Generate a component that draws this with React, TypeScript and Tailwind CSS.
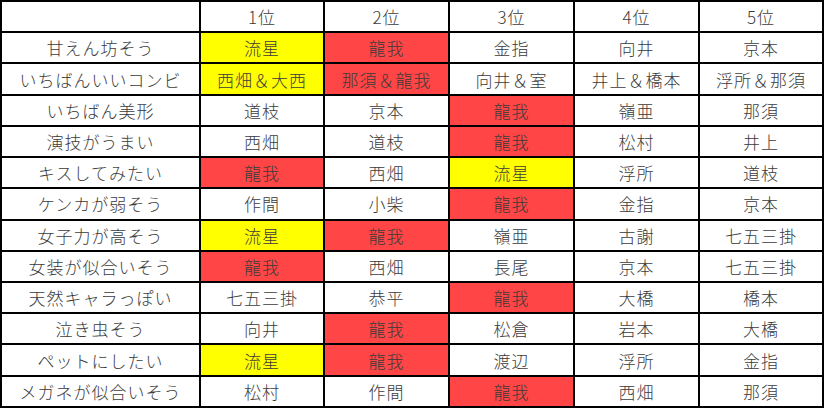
type Mark = 'y' | 'r' | undefined;

type Cell = { name: string; mark?: Mark };

const HEADERS = ['', '1位', '2位', '3位', '4位', '5位'];

const ROWS: { label: string; cells: Cell[] }[] = [
    { label: '甘えん坊そう', cells: [{ name: '流星', mark: 'y' }, { name: '龍我', mark: 'r' }, { name: '金指' }, { name: '向井' }, { name: '京本' }] },
    { label: 'いちばんいいコンビ', cells: [{ name: '西畑＆大西', mark: 'y' }, { name: '那須＆龍我', mark: 'r' }, { name: '向井＆室' }, { name: '井上＆橋本' }, { name: '浮所＆那須' }] },
    { label: 'いちばん美形', cells: [{ name: '道枝' }, { name: '京本' }, { name: '龍我', mark: 'r' }, { name: '嶺亜' }, { name: '那須' }] },
    { label: '演技がうまい', cells: [{ name: '西畑' }, { name: '道枝' }, { name: '龍我', mark: 'r' }, { name: '松村' }, { name: '井上' }] },
    { label: 'キスしてみたい', cells: [{ name: '龍我', mark: 'r' }, { name: '西畑' }, { name: '流星', mark: 'y' }, { name: '浮所' }, { name: '道枝' }] },
    { label: 'ケンカが弱そう', cells: [{ name: '作間' }, { name: '小柴' }, { name: '龍我', mark: 'r' }, { name: '金指' }, { name: '京本' }] },
    { label: '女子力が高そう', cells: [{ name: '流星', mark: 'y' }, { name: '龍我', mark: 'r' }, { name: '嶺亜' }, { name: '古謝' }, { name: '七五三掛' }] },
    { label: '女装が似合いそう', cells: [{ name: '龍我', mark: 'r' }, { name: '西畑' }, { name: '長尾' }, { name: '京本' }, { name: '七五三掛' }] },
    { label: '天然キャラっぽい', cells: [{ name: '七五三掛' }, { name: '恭平' }, { name: '龍我', mark: 'r' }, { name: '大橋' }, { name: '橋本' }] },
    { label: '泣き虫そう', cells: [{ name: '向井' }, { name: '龍我', mark: 'r' }, { name: '松倉' }, { name: '岩本' }, { name: '大橋' }] },
    { label: 'ペットにしたい', cells: [{ name: '流星', mark: 'y' }, { name: '龍我', mark: 'r' }, { name: '渡辺' }, { name: '浮所' }, { name: '金指' }] },
    { label: 'メガネが似合いそう', cells: [{ name: '松村' }, { name: '作間' }, { name: '龍我', mark: 'r' }, { name: '西畑' }, { name: '那須' }] },
];

function bg(mark: Mark) {
    if (mark === 'y') return 'bg-[#ffff00]';
    if (mark === 'r') return 'bg-[#ff4545]';
    return 'bg-white';
}

const cellBase =
    'flex items-center justify-center border-r-2 border-b-2 border-black text-[17px] leading-none tracking-[0.06em] whitespace-nowrap';

export default function App() {
    return (
        <div
            className="w-[825px] h-[408px] bg-white text-[#3b3b3b] font-light"
            style={{ fontFamily: '"Noto Sans CJK JP", "Noto Sans", sans-serif' }}
        >
            <div className="grid grid-cols-[199px_124px_125px_125px_125px_124px] auto-rows-[31.23px] w-fit border-l-2 border-t-2 border-black">
                {HEADERS.map((h, i) => (
                    <div key={i} className={cn(cellBase, 'bg-white')}>
                        {h}
                    </div>
                ))}
                {ROWS.map((row) => (
                    <Row key={row.label} label={row.label} cells={row.cells} />
                ))}
            </div>
        </div>
    );
}

function Row({ label, cells }: { label: string; cells: Cell[] }) {
    return (
        <>
            <div className={cn(cellBase, 'bg-white')}>{label}</div>
            {cells.map((c, i) => (
                <div key={i} className={cn(cellBase, bg(c.mark))}>
                    {c.name}
                </div>
            ))}
        </>
    );
}

function cn(...parts: string[]) {
    return parts.join(' ');
}
